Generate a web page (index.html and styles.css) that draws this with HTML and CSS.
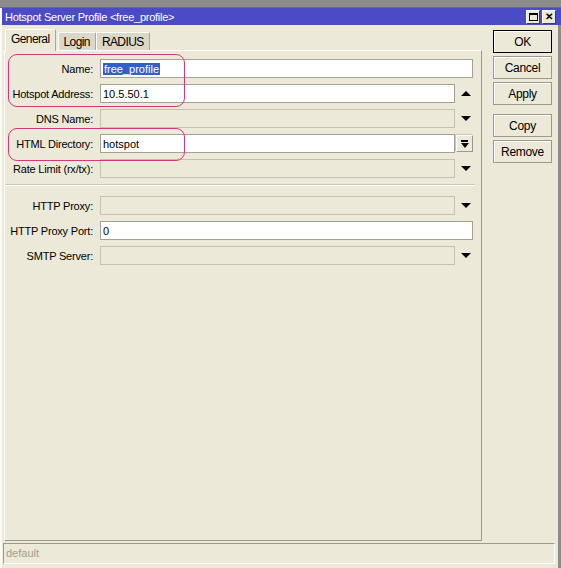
FILE: index.html
```html
<!DOCTYPE html>
<html lang="en">
<head>
  <meta charset="UTF-8" />
  <title>Hotspot Server Profile</title>
  <link rel="stylesheet" href="styles.css">
</head>
<body>
  <div class="topband"></div>
  <div class="window">
    <div class="titlebar">
      <span class="title">Hotspot Server Profile &lt;free_profile&gt;</span>
      <div class="title-btns">
        <span class="tbtn"><span class="max-box"></span></span>
        <span class="tbtn close">&#x2715;</span>
      </div>
    </div>

    <div class="main">
      <div class="left">
        <div class="tabs">
          <span class="tab active">General</span>
          <span class="tab">Login</span>
          <span class="tab">RADIUS</span>
        </div>

        <div class="panel">
          <div class="mark mark-a"></div>
          <div class="mark mark-b"></div>

          <div class="row">
            <label>Name:</label>
            <div class="field wide"><span class="sel">free_profile</span></div>
          </div>
          <div class="row">
            <label>Hotspot Address:</label>
            <div class="field">10.5.50.1</div>
            <span class="arrow up"></span>
          </div>
          <div class="row">
            <label>DNS Name:</label>
            <div class="field off"></div>
            <span class="arrow down"></span>
          </div>
          <div class="row">
            <label>HTML Directory:</label>
            <div class="field">hotspot</div>
            <span class="drop-btn"><span class="bar"></span><span class="arrow down"></span></span>
          </div>
          <div class="row">
            <label>Rate Limit (rx/tx):</label>
            <div class="field off"></div>
            <span class="arrow down"></span>
          </div>

          <div class="sep"></div>

          <div class="row">
            <label>HTTP Proxy:</label>
            <div class="field off"></div>
            <span class="arrow down"></span>
          </div>
          <div class="row">
            <label>HTTP Proxy Port:</label>
            <div class="field wide">0</div>
          </div>
          <div class="row">
            <label>SMTP Server:</label>
            <div class="field off"></div>
            <span class="arrow down"></span>
          </div>
        </div>
      </div>

      <div class="buttons">
        <button class="default">OK</button>
        <button>Cancel</button>
        <button>Apply</button>
        <button class="gap">Copy</button>
        <button>Remove</button>
      </div>
    </div>

    <div class="status">default</div>
  </div>
</body>
</html>
```

FILE: styles.css
```css
:root {
  --face: #ece9d8;
  --title: #4b4bc6;
  --shadow: #aca899;
  --text: #000;
  --mark: #d8357e;
}

* {
  box-sizing: border-box;
}

body {
  margin: 0;
  width: 561px;
  height: 568px;
  overflow: hidden;
  background: var(--face);
  font-family: "Liberation Sans", Arial, sans-serif;
  font-size: 11px;
  color: var(--text);
}

.topband {
  height: 8px;
  background: #8c8c8c;
  border-bottom: 1px solid #6e6e6e;
}

.window {
  height: 560px;
  border-left: 2px solid #fbfaf4;
  border-right: 3px solid #8e8d85;
  padding-right: 1px;
}

.titlebar {
  height: 17px;
  background: var(--title);
  color: #fff;
  display: flex;
  align-items: center;
  justify-content: space-between;
  padding: 0 3px;
  margin-right: -4px;
}

.title {
  font-size: 11px;
  letter-spacing: -0.25px;
}

.title-btns {
  display: flex;
  gap: 2px;
  margin-right: 2px;
}

.tbtn {
  width: 14px;
  height: 14px;
  background: var(--face);
  border: 1px solid #fff;
  border-right-color: #404040;
  border-bottom-color: #404040;
  display: flex;
  align-items: center;
  justify-content: center;
  color: #000;
  font-size: 10px;
  font-weight: bold;
  line-height: 1;
}

.max-box {
  width: 9px;
  height: 8px;
  border: 1px solid #000;
  border-top-width: 2px;
}

.main {
  display: flex;
  padding: 4px 0 0 2px;
  gap: 11px;
}

.left {
  width: 478px;
}

/* tab strip: only the selected tab is raised and joins the panel */
.tabs {
  display: flex;
  align-items: flex-end;
  height: 21px;
  padding-left: 1px;
}

.tab {
  height: 18px;
  padding: 2px 5px 0 5px;
  background: #dcd8c8;
  border: 1px solid #fff;
  border-bottom: none;
  border-right-color: var(--shadow);
  font-size: 12px;
  letter-spacing: -0.6px;
}

.tab.active {
  height: 22px;
  background: var(--face);
  margin-bottom: -1px;
  margin-right: 2px;
  position: relative;
  z-index: 1;
  padding: 2px 5px 0 5px;
}

.panel {
  position: relative;
  height: 491px;
  border: 1px solid #fff;
  border-right-color: #9d9a8c;
  border-bottom-color: #9d9a8c;
  padding-top: 8px;
}

.row {
  display: flex;
  align-items: center;
  height: 19px;
  margin-bottom: 6px;
}

.row label {
  width: 88px;
  text-align: right;
  margin-right: 7px;
  font-size: 11px;
  letter-spacing: -0.2px;
  white-space: nowrap;
}

.field {
  width: 355px;
  height: 19px;
  background: #fff;
  border: 1px solid #a5a295;
  padding: 2px 2px 0;
  font-size: 11px;
  line-height: 14px;
}

.field.wide {
  width: 373px;
}

.field.off {
  background: var(--face);
  border-color: #c4c1b2;
}

.sel {
  background: #3161c4;
  color: #fff;
  padding: 0 1px;
}

.arrow {
  width: 0;
  height: 0;
  margin-left: 6px;
  border-left: 5px solid transparent;
  border-right: 5px solid transparent;
}

.arrow.up {
  border-bottom: 5px solid #000;
}

.arrow.down {
  border-top: 5px solid #000;
}

.drop-btn {
  width: 17px;
  height: 17px;
  margin-left: 1px;
  border: 1px solid #fff;
  border-right-color: #9d9a8c;
  border-bottom-color: #9d9a8c;
  box-shadow: -1px -1px 0 #c9c6b7;
  display: flex;
  flex-direction: column;
  align-items: center;
  justify-content: center;
  gap: 1px;
}

.drop-btn .bar {
  width: 7px;
  height: 2px;
  background: #000;
}

.drop-btn .arrow.down {
  margin-left: 0;
  border-left-width: 4px;
  border-right-width: 4px;
  border-top-width: 5px;
}

.sep {
  height: 2px;
  margin: 1px 6px 10px 0;
  border-top: 1px solid #c9c6b7;
  border-bottom: 1px solid #fff;
}

/* rounded pink outlines round the edited fields */
.mark {
  position: absolute;
  border: 1px solid var(--mark);
  border-radius: 9px;
  left: 3px;
  width: 177px;
}

.mark-a {
  top: 3px;
  height: 53px;
}

.mark-b {
  top: 77px;
  height: 33px;
}

.buttons {
  display: flex;
  flex-direction: column;
  gap: 3px;
  width: 59px;
  padding-top: 1px;
}

button {
  height: 23px;
  font-family: inherit;
  font-size: 12px;
  letter-spacing: -0.3px;
  background: var(--face);
  border: 1px solid #9d9a8c;
  box-shadow: inset 1px 1px 0 #fff;
  color: #000;
  padding: 0;
}

button.default {
  border: 1px solid #000;
}

button.gap {
  margin-top: 6px;
}

.status {
  margin: 2px 2px 0 1px;
  height: 21px;
  border: 1px solid #9d9a8c;
  border-right-color: #fff;
  border-bottom-color: #fff;
  color: #a09e92;
  padding: 3px 2px 0;
  font-size: 11px;
}
```
